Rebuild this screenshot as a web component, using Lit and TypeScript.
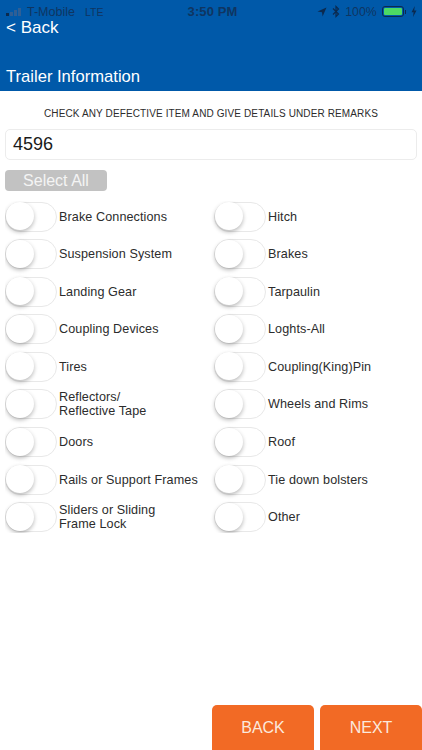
import { LitElement, html, css } from "lit";
import { customElement } from "lit/decorators.js";

const left = ["Brake Connections", "Suspension System", "Landing Gear", "Coupling Devices", "Tires", "Reflectors/\nReflective Tape", "Doors", "Rails or Support Frames", "Sliders or Sliding\nFrame Lock"];
const right = ["Hitch", "Brakes", "Tarpaulin", "Loghts-All", "Coupling(King)Pin", "Wheels and Rims", "Roof", "Tie down bolsters", "Other"];

@customElement("app-root")
export class AppRoot extends LitElement {
  static styles = css`
    :host { display: block; width: 422px; height: 750px; background: #fff; font-family: "Liberation Sans", Arial, sans-serif; overflow: hidden; }
    .page { display: flex; flex-direction: column; height: 750px; }
    .header { height: 91px; background: #0059a9; color: #fff; display: flex; flex-direction: column; flex: none; }
    .status { height: 22px; display: grid; grid-template-columns: 1fr auto 1fr; align-items: center; padding: 1px 5px 0 6px; box-sizing: border-box; color: #0f3561; font-size: 12.5px; }
    .status-left { display: flex; align-items: center; gap: 6px; }
    .status-left .lte { margin-left: 4px; font-size: 10.5px; }
    .bars { display: flex; align-items: flex-end; gap: 1px; height: 8px; }
    .bars i { display: block; width: 3px; background: #0b2a4f; }
    .bars i.off { background: #2f5f95; }
    .time { font-weight: 700; font-size: 13px; letter-spacing: 0.1px; margin-left: 2px; }
    .status-right { display: flex; justify-content: flex-end; align-items: center; gap: 5px; }
    .pct { font-size: 12.2px; }
    .battery { display: flex; align-items: center; }
    .battery-body { width: 22px; height: 11px; border: 1px solid #0b2a4f; border-radius: 3px; padding: 1px; box-sizing: border-box; }
    .battery-body div { height: 100%; background: #4cd964; border-radius: 1px; }
    .battery-tip { width: 1.5px; height: 4px; background: #0b2a4f; margin-left: 1px; }
    .back { font-size: 17px; line-height: 20px; margin: -4px 0 0 6px; }
    .title { font-size: 16.6px; line-height: 20px; margin: 29px 0 0 6px; }
    .hint { text-align: center; font-size: 10px; line-height: 13px; color: #2c2c2c; margin-top: 16px; letter-spacing: 0.12px; }
    .input { margin: 9px 5px 0; height: 31px; box-sizing: border-box; border: 1px solid #ececec; border-radius: 5px; padding: 0 7px; font-size: 18px; line-height: 29px; color: #1a1a1a; }
    .select { margin: 10px 0 0 5px; width: 102px; height: 21px; background: #c2c2c2; border-radius: 4px; color: #f4f4f4; font-size: 16px; line-height: 21px; text-align: center; }
    .grid { margin: 10px 0 0 5px; display: grid; grid-template-columns: 209px 1fr; grid-auto-flow: column; grid-template-rows: repeat(9, 37.6px); height: 332px; overflow: hidden; }
    .item { display: flex; align-items: center; gap: 2px; height: 31px; }
    .switch { flex: none; width: 52px; height: 30px; box-sizing: border-box; border: 1.5px solid #e8e8e8; border-radius: 15px; position: relative; background: #fff; }
    .knob { position: absolute; left: 0; top: -0.5px; width: 28px; height: 28px; border-radius: 50%; background: #fff; box-shadow: 0 2px 4px rgba(0,0,0,0.28); }
    .label { font-size: 12.6px; line-height: 14px; color: #2c2c2c; white-space: pre-line; letter-spacing: 0.1px; }
    .footer { margin-top: auto; display: flex; justify-content: flex-end; gap: 6px; }
    .btn { width: 102px; height: 45px; background: #f26a25; color: #fbe9dd; border-radius: 5px 5px 0 0; font-size: 16px; line-height: 45px; text-align: center; }
  `;

  item(text: string) {
    return html`<div class="item"><div class="switch"><div class="knob"></div></div><div class="label">${text}</div></div>`;
  }

  render() {
    return html`<div class="page">
      <div class="header">
        <div class="status">
          <div class="status-left">
            <div class="bars"><i style="height:3px"></i><i class="off" style="height:4px"></i><i class="off" style="height:6px"></i><i class="off" style="height:8px"></i></div>
            <span>T-Mobile</span><span class="lte">LTE</span>
          </div>
          <div class="time">3:50 PM</div>
          <div class="status-right">
            <svg width="10" height="10" viewBox="0 0 10 10"><path d="M9.5.5 0.5 4.5 5 5.2 5.6 9.5Z" fill="#0b2a4f"/></svg>
            <svg width="8" height="13" viewBox="0 0 8 13"><path d="M1 3.5 6.5 9 4 11.5V1.5L6.5 4 1 9.5" fill="none" stroke="#0b2a4f" stroke-width="1.2"/></svg>
            <span class="pct">100%</span>
            <div class="battery"><div class="battery-body"><div></div></div><div class="battery-tip"></div></div>
            <svg width="6" height="11" viewBox="0 0 6 11"><path d="M3.8 0 0.5 6.2H2.6L2 11 5.5 4.6H3.2Z" fill="#0b2a4f"/></svg>
          </div>
        </div>
        <div class="back">&lt; Back</div>
        <div class="title">Trailer Information</div>
      </div>
      <div class="hint">CHECK ANY DEFECTIVE ITEM AND GIVE DETAILS UNDER REMARKS</div>
      <div class="input">4596</div>
      <div class="select">Select All</div>
      <div class="grid">
        ${left.map((t) => this.item(t))}
        ${right.map((t) => this.item(t))}
      </div>
      <div class="footer"><div class="btn">BACK</div><div class="btn">NEXT</div></div>
    </div>`;
  }
}
